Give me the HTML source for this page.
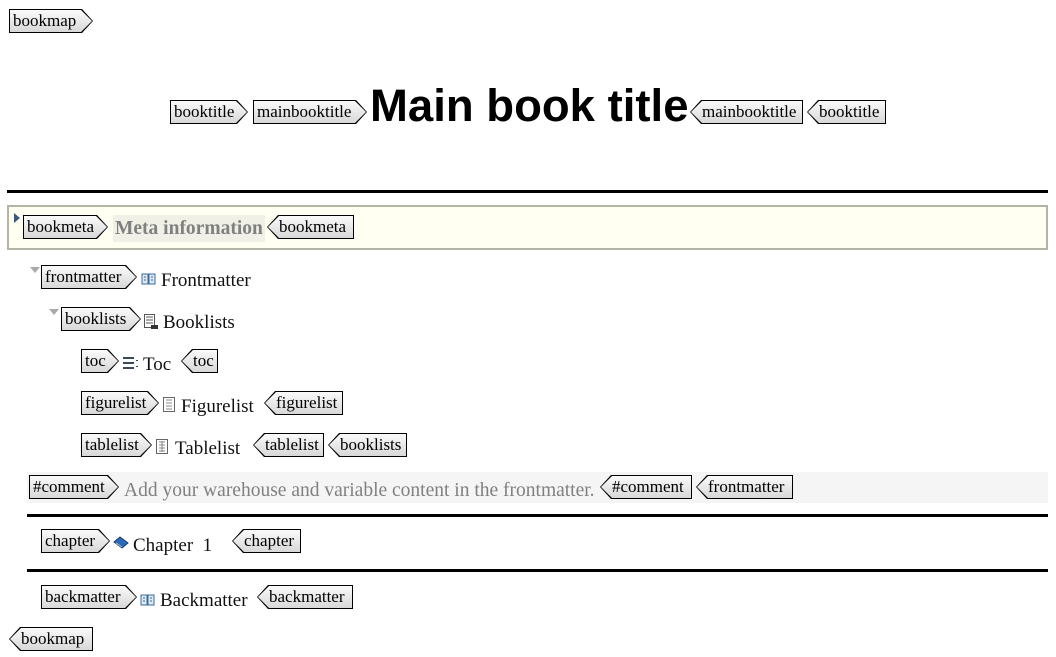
<!DOCTYPE html>
<html><head><meta charset="utf-8"><style>
body{margin:0;width:1056px;height:657px;background:#fff;position:relative;overflow:hidden;font-family:"Liberation Serif",serif;}
.a{position:absolute;}
.t{position:absolute;height:24px;background:#000;font-size:17px;line-height:23px;color:#000;}
.t i{position:absolute;left:1px;top:1px;right:1px;bottom:1px;background:linear-gradient(#fafafa,#d8d8d8);}
.t b{position:relative;font-weight:normal;white-space:nowrap;}
.s,.s i{clip-path:polygon(0 0,calc(100% - 11px) 0,100% 50%,calc(100% - 11px) 100%,0 100%);}
.e,.e i{clip-path:polygon(11px 0,100% 0,100% 100%,11px 100%,0 50%);}
.s b{padding-left:4px;}
.e b{padding-left:12px;}
.x{position:absolute;font-size:19px;color:#111;white-space:nowrap;line-height:24px;}
.hr{position:absolute;background:#000;height:3px;}
.tri{position:absolute;width:0;height:0;border-left:5px solid transparent;border-right:5px solid transparent;border-top:6px solid #aaa;}
</style></head><body>
<span class="t s" style="left:9px;top:9px;width:84px"><i></i><b>bookmap</b></span>

<span class="t s" style="left:170px;top:100px;width:78px"><i></i><b>booktitle</b></span>
<span class="t s" style="left:253px;top:100px;width:114px"><i></i><b>mainbooktitle</b></span>
<div class="a" style="left:370px;top:79px;font-family:'Liberation Sans',sans-serif;font-weight:bold;font-size:45.5px;line-height:54px;white-space:nowrap">Main book title</div>
<span class="t e" style="left:690px;top:100px;width:113px"><i></i><b>mainbooktitle</b></span>
<span class="t e" style="left:807px;top:100px;width:79px"><i></i><b>booktitle</b></span>

<div class="hr" style="left:7px;top:190px;width:1041px"></div>

<div class="a" style="left:7px;top:205px;width:1037px;height:41px;border:2px solid #b4b4a4;background:#fffff2"></div>
<div class="a" style="left:14px;top:213px;width:0;height:0;border-top:5px solid transparent;border-bottom:5px solid transparent;border-left:6px solid #3c5a78"></div>
<span class="t s" style="left:23px;top:215px;width:85px"><i></i><b>bookmeta</b></span>
<div class="a" style="left:113px;top:215px;width:150px;height:27px;background:#f0f0e6;color:#808080;font-weight:bold;font-size:19.5px;line-height:28px;padding-left:2px;white-space:nowrap">Meta information</div>
<span class="t e" style="left:267px;top:215px;width:87px"><i></i><b>bookmeta</b></span>

<div class="tri" style="left:30px;top:267px"></div>
<span class="t s" style="left:41px;top:265px;width:96px"><i></i><b>frontmatter</b></span>
<svg class="a" style="left:141px;top:272px" width="16" height="14"><rect x="1" y="2" width="6" height="10" fill="#dfe8f3" stroke="#3a6a9a"/><rect x="8" y="2" width="6" height="10" fill="#dfe8f3" stroke="#3a6a9a"/><path d="M3 5h2M3 8h2M10 5h2M10 8h2" stroke="#3a6a9a"/></svg>
<div class="x" style="left:161px;top:269px">Frontmatter</div>

<div class="tri" style="left:49px;top:309px"></div>
<span class="t s" style="left:61px;top:307px;width:80px"><i></i><b>booklists</b></span>
<svg class="a" style="left:143px;top:313px" width="16" height="17"><rect x="1.5" y="1.5" width="10" height="13" fill="#fff" stroke="#555"/><path d="M3 4h7M3 7h7M3 10h7" stroke="#555"/><rect x="8" y="12" width="7" height="4" fill="#333"/></svg>
<div class="x" style="left:163px;top:311px">Booklists</div>

<span class="t s" style="left:81px;top:349px;width:38px"><i></i><b>toc</b></span>
<svg class="a" style="left:122px;top:356px" width="18" height="14"><path d="M1 2h11M1 7h11M1 12h11M15 4v1M15 10v1" stroke="#3a4a5a" stroke-width="2"/></svg>
<div class="x" style="left:143px;top:353px">Toc</div>
<span class="t e" style="left:181px;top:349px;width:37px"><i></i><b>toc</b></span>

<span class="t s" style="left:81px;top:391px;width:78px"><i></i><b>figurelist</b></span>
<svg class="a" style="left:163px;top:397px" width="12" height="16"><rect x="0.5" y="0.5" width="11" height="14" fill="#fff" stroke="#666"/><path d="M3 3h6M3 6h6M3 9h6M3 12h6" stroke="#888"/></svg>
<div class="x" style="left:181px;top:395px">Figurelist</div>
<span class="t e" style="left:264px;top:391px;width:79px"><i></i><b>figurelist</b></span>

<span class="t s" style="left:81px;top:433px;width:71px"><i></i><b>tablelist</b></span>
<svg class="a" style="left:156px;top:439px" width="12" height="16"><rect x="0.5" y="0.5" width="11" height="14" fill="#fff" stroke="#666"/><path d="M3 3h6M3 6h6M3 9h6M3 12h6M6 2v11" stroke="#888"/></svg>
<div class="x" style="left:175px;top:437px">Tablelist</div>
<span class="t e" style="left:253px;top:433px;width:71px"><i></i><b>tablelist</b></span>
<span class="t e" style="left:328px;top:433px;width:79px"><i></i><b>booklists</b></span>

<div class="a" style="left:27px;top:472px;width:1021px;height:31px;background:#f5f5f5"></div>
<span class="t s" style="left:29px;top:475px;width:90px"><i></i><b>#comment</b></span>
<div class="x" style="left:124px;top:479px;color:#808080;font-size:19.5px">Add your warehouse and variable content in the frontmatter.</div>
<span class="t e" style="left:600px;top:475px;width:92px"><i></i><b>#comment</b></span>
<span class="t e" style="left:696px;top:475px;width:97px"><i></i><b>frontmatter</b></span>

<div class="hr" style="left:27px;top:514px;width:1021px"></div>

<span class="t s" style="left:41px;top:529px;width:69px"><i></i><b>chapter</b></span>
<svg class="a" style="left:113px;top:536px" width="16" height="14"><path d="M1 6l6-5 8 6-6 5z" fill="#2a6ab8" stroke="#1a3a78"/><path d="M3 7l6 4" stroke="#9cc" /></svg>
<div class="x" style="left:133px;top:534px">Chapter&nbsp;&nbsp;1</div>
<span class="t e" style="left:232px;top:529px;width:69px"><i></i><b>chapter</b></span>

<div class="hr" style="left:27px;top:569px;width:1021px"></div>

<span class="t s" style="left:41px;top:585px;width:96px"><i></i><b>backmatter</b></span>
<svg class="a" style="left:140px;top:593px" width="16" height="14"><rect x="1" y="2" width="6" height="10" fill="#dfe8f3" stroke="#3a6a9a"/><rect x="8" y="2" width="6" height="10" fill="#dfe8f3" stroke="#3a6a9a"/><path d="M3 5h2M3 8h2M10 5h2M10 8h2" stroke="#3a6a9a"/></svg>
<div class="x" style="left:160px;top:589px">Backmatter</div>
<span class="t e" style="left:257px;top:585px;width:96px"><i></i><b>backmatter</b></span>

<span class="t e" style="left:9px;top:627px;width:84px"><i></i><b>bookmap</b></span>
</body></html>
